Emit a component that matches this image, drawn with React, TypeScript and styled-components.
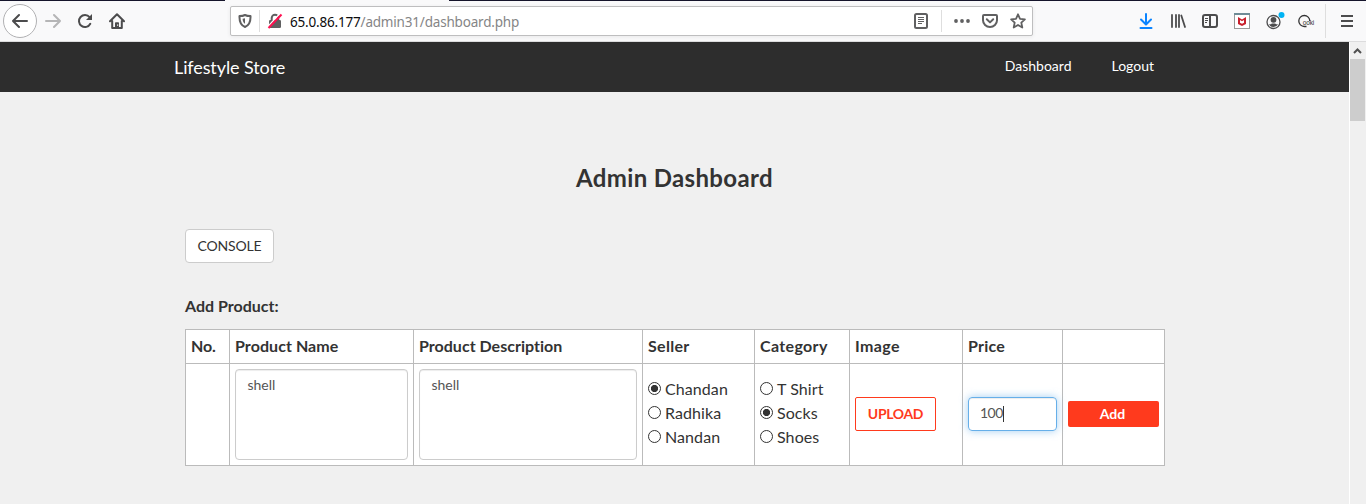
import React from "react";
import styled, { createGlobalStyle } from "styled-components";

const Global = createGlobalStyle`
  * { box-sizing: border-box; }
  body { margin: 0; background: #f0f0f0; overflow: hidden; }
`;

const brandFont = `Lato, "Open Sans", sans-serif`;

const Window = styled.div`
  height: 504px;
  display: flex;
  flex-direction: column;
  font-family: ${brandFont};
  font-variant-ligatures: none;
  color: #333;
`;

const TabEdge = styled.div`
  height: 1px;
  flex: none;
  background: linear-gradient(to right, #15142b 225px, #f9f9fa 225px, #f9f9fa 449px, #15142b 449px);
`;

const Toolbar = styled.div`
  height: 41px;
  flex: none;
  display: flex;
  align-items: center;
  background: #f9f9fa;
  border-bottom: 1px solid #dcdcdd;
  svg { display: block; flex: none; }
`;

const NavButtons = styled.div`
  width: 230px;
  display: flex;
  align-items: center;
  padding-left: 3px;
  color: #4c4c4d;
`;

const BackButton = styled.div`
  width: 34px;
  height: 34px;
  border: 1px solid #b1b1b3;
  border-radius: 50%;
  background: #fff;
  display: grid;
  place-items: center;
`;

const NavIcon = styled.div<{ $left: number; $faded?: boolean }>`
  margin-left: ${(p) => p.$left}px;
  color: ${(p) => (p.$faded ? "#b5b5b6" : "#4c4c4d")};
`;

const AddressBar = styled.div`
  width: 803px;
  height: 30px;
  display: flex;
  align-items: center;
  padding: 0 6px 0 7px;
  background: #fff;
  border: 1px solid #bebebf;
  border-radius: 2px;
  box-shadow: 0 1px 4px rgba(0, 0, 0, 0.07);
  color: #606061;
`;

const Divider = styled.div<{ $h: number; $m: string }>`
  width: 1px;
  height: ${(p) => p.$h}px;
  margin: ${(p) => p.$m};
  background: #dedede;
`;

const Url = styled.div`
  margin: 2px 0 0 7px;
  flex: 1;
  font: 13.5px/20px "Noto Sans", sans-serif;
  letter-spacing: -0.19px;
  color: #858586;
  b { font-weight: 400; color: #0c0c0d; }
`;

const BarActions = styled.div`
  display: flex;
  align-items: center;
`;

const Extensions = styled.div`
  flex: 1;
  height: 100%;
  display: flex;
  align-items: center;
  padding-left: 105px;
  gap: 16px;
  color: #4c4c4d;
`;

const Viewport = styled.div`
  flex: 1;
  min-height: 0;
  display: flex;
`;

const Page = styled.div`
  width: 1349px;
  background: #f0f0f0;
`;

const ScrollTrack = styled.div`
  width: 17px;
  background: #f0f0f0;
  border-left: 1px solid #fff;
  padding-right: 1px;
`;

const ScrollUp = styled.div`
  height: 17px;
  display: grid;
  place-items: center;
`;

const ScrollThumb = styled.div`
  height: 62px;
  background: #cdcdcd;
`;

const NavBar = styled.nav`
  height: 50px;
  display: flex;
  align-items: center;
  padding: 0 195px 0 174px;
  background: #2d2d2d;
  color: #fff;
`;

const Brand = styled.div`
  flex: 1;
  font-size: 18px;
  line-height: 20px;
  letter-spacing: -0.1px;
`;

const NavLink = styled.a`
  margin-left: 40px;
  padding-bottom: 2px;
  font-size: 14px;
  line-height: 20px;
`;

const Title = styled.h1`
  margin: 71px 0 0;
  text-align: center;
  font-size: 24px;
  line-height: 30px;
  font-weight: 700;
  letter-spacing: 0.34px;
`;

const Content = styled.main`
  margin-left: 185px;
  width: 980px;
`;

const ConsoleButton = styled.button`
  display: block;
  margin-top: 36px;
  width: 89px;
  height: 34px;
  padding: 0 0 1px;
  border: 1px solid #ccc;
  border-radius: 4px;
  background: #fff;
  color: #333;
  font: 14px/20px ${brandFont};
  letter-spacing: -0.15px;
`;

const SectionTitle = styled.h2`
  margin: 33px 0 13px;
  font-size: 16px;
  line-height: 20px;
  font-weight: 700;
`;

const Table = styled.div`
  display: grid;
  grid-template-columns: 44px 184px 229px 112px 95px 113px 100px 102px;
  grid-template-rows: 34px 102px;
  border: solid #bbb;
  border-width: 1px 0 0 1px;
  background: #fff;
`;

const Cell = styled.div`
  padding: 5px 5px 6px;
  display: flex;
  flex-direction: column;
  justify-content: center;
  align-items: flex-start;
  border: solid #bbb;
  border-width: 0 1px 1px 0;
  font-size: 16px;
  line-height: 24px;
`;

const HeadCell = styled(Cell)<{ $sp: number }>`
  padding: 4px 5px 6px;
  font-weight: 700;
  white-space: nowrap;
  letter-spacing: ${(p) => p.$sp}px;
`;

const ControlCell = styled(Cell)`
  padding-bottom: 7px;
`;

const TextArea = styled.div`
  width: 100%;
  height: 91px;
  margin-bottom: -1px;
  padding: 5px 11.5px;
  border: 1px solid #ccc;
  border-radius: 4px;
  box-shadow: inset 0 1px 1px rgba(0, 0, 0, 0.075);
  font-size: 14px;
  line-height: 20px;
  color: #555;
`;

const Option = styled.label`
  height: 24px;
  display: flex;
  align-items: center;
  gap: 4px;
  padding-bottom: 2px;
  letter-spacing: 0.08px;
  white-space: nowrap;
`;

const Dot = styled.span<{ $on?: boolean }>`
  width: 13px;
  height: 13px;
  margin-bottom: 1px;
  border: 1px solid #333;
  border-radius: 50%;
  background: ${(p) => (p.$on ? "radial-gradient(circle, #333 3.2px, #fff 4px)" : "#fff")};
`;

const UploadButton = styled.button`
  width: 81px;
  height: 34px;
  padding: 0;
  border: 1px solid #ff3a1d;
  border-radius: 2px;
  background: #fff;
  color: #ff3a1d;
  font: 700 14px/20px ${brandFont};
  letter-spacing: -0.35px;
`;

const PriceInput = styled.div`
  width: 89px;
  height: 34px;
  padding: 5px 12px 7px 11px;
  display: flex;
  align-items: center;
  border: 1px solid #66afe9;
  border-radius: 4px;
  box-shadow: inset 0 1px 1px rgba(0, 0, 0, 0.075), 0 0 8px rgba(102, 175, 233, 0.6);
  font-size: 14px;
  line-height: 20px;
  letter-spacing: -0.5px;
  color: #555;
`;

const Caret = styled.span`
  width: 1px;
  height: 16px;
  margin-top: 3px;
  background: #333;
`;

const AddButton = styled.button`
  width: 91px;
  height: 26px;
  padding: 0 2px 0 0;
  border: 0;
  border-radius: 2px;
  background: #ff3a1d;
  color: #fff;
  font: 700 14px/20px ${brandFont};
`;

const line = { fill: "none", stroke: "currentColor", strokeWidth: 2, strokeLinecap: "round", strokeLinejoin: "round" } as const;

const ArrowIcon = ({ flip }: { flip?: boolean }) => (
  <svg width="16" height="16" viewBox="0 0 16 16" {...line}>
    <path d={flip ? "M1 8h14M9 2l6 6-6 6" : "M15 8H1M7 2L1 8l6 6"} />
  </svg>
);

const ReloadIcon = () => (
  <svg width="16" height="16" viewBox="0 0 16 16" fill="none" stroke="currentColor" strokeWidth="2" strokeLinecap="round">
    <path d="M12.6 4.2A6 6 0 1 0 13.3 10.8" />
    <path d="M15 1v6H9z" fill="currentColor" stroke="none" />
  </svg>
);

const HomeIcon = () => (
  <svg width="16" height="16" viewBox="0 0 16 16" {...line}>
    <path d="M1 8.3L8 1.2l7 7.1M3.2 8v7h9.6V8" />
    <path d="M6 14.5V10a.8.8 0 0 1 .8-.8h2.4a.8.8 0 0 1 .8.8v4.5z" fill="currentColor" stroke="none" />
    <path d="M8.7 11.8v.7" stroke="#fff" strokeWidth="1" />
  </svg>
);

const ShieldIcon = () => (
  <svg width="14" height="14" viewBox="0 0 14 14" {...line}>
    <path d="M7 1C5.500 1.800 3.500 2.100 1.500 2.100C1.300 7 2.200 11.300 7 13C11.800 11.300 12.700 7 12.500 2.100C10.500 2.100 8.500 1.800 7 1Z" />
    <path d="M7 4.200v5.600C5.400 8.800 4.700 7 4.600 4.700Q6 4.600 7 4.200z" fill="currentColor" stroke="none" />
  </svg>
);

const LockIcon = () => (
  <svg width="16" height="16" viewBox="0 0 16 16" fill="none">
    <path d="M4.700 7V5a3.300 3.300 0 0 1 6.600 0v2" stroke="currentColor" strokeWidth="2" />
    <rect x="2" y="7" width="12" height="8" rx="1.300" fill="currentColor" />
    <path d="M.5 14L13 .5" stroke="#fff" strokeWidth="1.500" />
    <path d="M1.500 15L14.500 1.500" stroke="#ff1050" strokeWidth="2" />
  </svg>
);

const ReaderIcon = () => (
  <svg width="14" height="16" viewBox="0 0 14 16" fill="none" stroke="currentColor">
    <rect x="1" y="1" width="12" height="14" rx="1.500" strokeWidth="2" />
    <path d="M4 4.500h6M4 6.500h6M4 8.500h6M4 10.500h4" />
  </svg>
);

const DotsIcon = () => (
  <svg width="16" height="16" viewBox="0 0 16 16" fill="currentColor">
    <circle cx="2" cy="8" r="1.900" /><circle cx="8" cy="8" r="1.900" /><circle cx="14" cy="8" r="1.900" />
  </svg>
);

const PocketIcon = () => (
  <svg width="16" height="16" viewBox="0 0 16 16" {...line}>
    <path d="M2 2h12a1 1 0 0 1 1 1v4.200a7 6.800 0 0 1-14 0V3a1 1 0 0 1 1-1z" />
    <path d="M4.800 6.300L8 9.400l3.200-3.100" />
  </svg>
);

const StarIcon = () => (
  <svg width="16" height="16" viewBox="0 0 16 16" fill="none" stroke="currentColor" strokeWidth="1.800" strokeLinejoin="round">
    <path d="M8 1.300l2 4.500 4.900.5-3.600 3.300 1 4.900L8 12l-4.300 2.500 1-4.900L1.100 6.300 6 5.800z" />
  </svg>
);

const DownloadIcon = () => (
  <svg width="16" height="16" viewBox="0 0 16 16" {...line} stroke="#0a84ff">
    <path d="M8 1v10M3 6.500L8 11.500l5-5M2.500 15h11" />
  </svg>
);

const LibraryIcon = () => (
  <svg width="16" height="16" viewBox="0 0 16 16" fill="none" stroke="currentColor" strokeWidth="2" strokeLinecap="round">
    <path d="M2 2v12M6 2v12M9 2v12M11.300 2.500L15 14" strokeWidth="1.800" />
  </svg>
);

const SidebarIcon = () => (
  <svg width="16" height="16" viewBox="0 0 16 16" fill="none" stroke="currentColor">
    <rect x="1" y="2" width="14" height="12" rx="2" strokeWidth="2" />
    <path d="M8 2v12" strokeWidth="2" />
    <path d="M3 5.500h3M3 7.500h3M3 9.500h2" />
  </svg>
);

const McAfeeIcon = () => (
  <svg width="16" height="16" viewBox="0 0 16 16">
    <rect x=".5" y=".5" width="15" height="15" fill="#fff" stroke="#999" />
    <path d="M0 0h16v2H0z" fill="#6f8b96" />
    <path d="M4 4l4 2.400L12 4v7l-4 2-4-2z" fill="#c8202d" />
    <path d="M6 7l2 1.300L10 7v2.700l-2 1-2-1z" fill="#fff" />
  </svg>
);

const AccountIcon = () => (
  <svg width="19" height="18" viewBox="0 0 19 18" fill="none">
    <circle cx="7.500" cy="10" r="6.500" stroke="currentColor" strokeWidth="1.300" />
    <circle cx="7.500" cy="7.800" r="2.900" fill="currentColor" />
    <path d="M3 12.300q2 .3 2.800-.9h3.400q.8 1.200 2.800.9A5 5 0 0 1 3 12.300z" fill="currentColor" />
    <circle cx="15.500" cy="3" r="3" fill="#00b3f4" />
  </svg>
);

const GokiSlot = styled.div`
  margin: 0 -1px 0 -3px;
`;

const GokiIcon = () => (
  <svg width="17" height="16" viewBox="0 0 17 16" fill="none">
    <path d="M11.800 8A5.500 5.500 0 1 0 6.300 13.500H8.500" stroke="#333" strokeWidth="1.300" />
    <text x="4.800" y="11.800" fontSize="6.500" fontFamily="Liberation Sans" fill="#333" textLength="11.500">ooki</text>
  </svg>
);

const MenuIcon = () => (
  <svg width="12" height="12" viewBox="0 0 12 12" stroke="currentColor" strokeWidth="2">
    <path d="M0 1h12M0 6h12M0 11h12" />
  </svg>
);

const headings: [string, number][] = [
  ["No.", -0.1], ["Product Name", 0.07], ["Product Description", 0.02], ["Seller", 0.3],
  ["Category", 0.35], ["Image", 0.4], ["Price", 0.2], ["", 0],
];
const sellers = ["Chandan", "Radhika", "Nandan"];
const categories = ["T Shirt", "Socks", "Shoes"];

const Options = ({ items, selected }: { items: string[]; selected: string }) => (
  <>
    {items.map((item) => (
      <Option key={item}>
        <Dot $on={item === selected} />
        {item}
      </Option>
    ))}
  </>
);

export default function App() {
  return (
    <Window>
      <Global />
      <TabEdge />
      <Toolbar>
        <NavButtons>
          <BackButton><ArrowIcon /></BackButton>
          <NavIcon $left={8} $faded><ArrowIcon flip /></NavIcon>
          <NavIcon $left={16}><ReloadIcon /></NavIcon>
          <NavIcon $left={16}><HomeIcon /></NavIcon>
        </NavButtons>
        <AddressBar>
          <ShieldIcon />
          <Divider $h={22} $m="0 7px 0 7px" />
          <LockIcon />
          <Url><b>65.0.86.177</b>/admin31/dashboard.php</Url>
          <BarActions>
            <ReaderIcon />
            <Divider $h={22} $m="0 12px 0 13px" />
            <DotsIcon />
            <Divider $h={0} $m="0 5px 0 6px" />
            <PocketIcon />
            <Divider $h={0} $m="0 5px 0 6px" />
            <StarIcon />
          </BarActions>
        </AddressBar>
        <Extensions>
          <DownloadIcon />
          <LibraryIcon />
          <SidebarIcon />
          <McAfeeIcon />
          <AccountIcon />
          <GokiSlot><GokiIcon /></GokiSlot>
          <Divider $h={34} $m="0 -1px 0 -5px" />
          <MenuIcon />
        </Extensions>
      </Toolbar>
      <Viewport>
        <Page>
          <NavBar>
            <Brand>Lifestyle Store</Brand>
            <NavLink>Dashboard</NavLink>
            <NavLink>Logout</NavLink>
          </NavBar>
          <Title>Admin Dashboard</Title>
          <Content>
            <ConsoleButton>CONSOLE</ConsoleButton>
            <SectionTitle>Add Product:</SectionTitle>
            <Table>
              {headings.map(([label, spacing], i) => (
                <HeadCell key={i} $sp={spacing}>{label}</HeadCell>
              ))}
              <Cell />
              <Cell><TextArea>shell</TextArea></Cell>
              <Cell><TextArea>shell</TextArea></Cell>
              <Cell><Options items={sellers} selected="Chandan" /></Cell>
              <Cell><Options items={categories} selected="Socks" /></Cell>
              <ControlCell><UploadButton>UPLOAD</UploadButton></ControlCell>
              <ControlCell><PriceInput>100<Caret /></PriceInput></ControlCell>
              <ControlCell><AddButton>Add</AddButton></ControlCell>
            </Table>
          </Content>
        </Page>
        <ScrollTrack>
          <ScrollUp>
            <svg width="9" height="6" viewBox="0 0 9 6" fill="none" stroke="#505050" strokeWidth="2"><path d="M1 5l3.500-3.500L8 5" /></svg>
          </ScrollUp>
          <ScrollThumb />
        </ScrollTrack>
      </Viewport>
    </Window>
  );
}
